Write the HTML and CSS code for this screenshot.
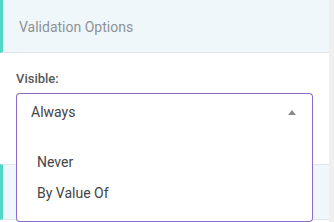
FILE: index.html
```html
<!DOCTYPE html>
<html>
<head>
<meta charset="utf-8">
<link rel="stylesheet" href="styles.css">
</head>
<body>
<div class="page">
  <div class="content">
    <div class="panel-head">Validation Options</div>
    <div class="panel-body">
      <div class="label">Visible:</div>
      <div class="select">
        <div class="select-box">
          <span>Always</span>
          <svg class="caret" width="8" height="5" viewBox="0 0 8 5"><path d="M0 5 L4 0 L8 5 Z" fill="#8a8a8a"/></svg>
        </div>
        <ul class="menu">
          <li>Never</li>
          <li>By Value Of</li>
        </ul>
      </div>
    </div>
    <div class="panel-head second"></div>
  </div>
  <div class="scroll"></div>
</div>
</body>
</html>
```
FILE: styles.css
```css
html, body { margin: 0; padding: 0; }
body { font-family: Roboto, "Liberation Sans", sans-serif; background: #fff; width: 334px; height: 222px; overflow: hidden; }
.page { display: flex; height: 222px; }
.content { width: 329px; }
.scroll { width: 5px; background: #efefef; }
.panel-head {
  height: 51px;
  background: #f0f7fb;
  border-left: 3px solid #4fd8c6;
  border-bottom: 1px solid #dfe4e8;
  box-sizing: content-box;
  padding-left: 16px;
  padding-top: 1px;
  display: flex;
  align-items: center;
  font-size: 14px;
  color: #8d9297;
}
.panel-head.second {
  border-top: 1px solid #dfe4e8;
  height: 53px;
}
.panel-body { padding: 17px 16px 33px 16px; }
.label { font-size: 13px; font-weight: 500; color: #585858; line-height: 17px; margin-bottom: 6px; }
.select { position: relative; width: 297px; }
.select-box {
  height: 36px;
  border: 1px solid #8c6cc8;
  border-bottom: 1px solid #f2f2f2;
  border-radius: 4px 4px 0 0;
  box-sizing: content-box;
  display: flex;
  align-items: center;
  justify-content: space-between;
  padding: 0 16px 0 14px;
  font-size: 14px;
  color: #444;
}
.caret { margin-top: 1px; }
.menu {
  position: absolute;
  left: 0; right: 0; top: 37px;
  margin: 0;
  list-style: none;
  background: #fff;
  border: 1px solid #8c6cc8;
  border-top: none;
  border-radius: 0 0 4px 4px;
  padding: 17px 0 12px 0;
  width: 297px;
  box-sizing: border-box;
  height: 92px;
  z-index: 2;
}
.menu li { font-size: 14px; color: #444; padding-left: 20px; line-height: 31px; }
```
